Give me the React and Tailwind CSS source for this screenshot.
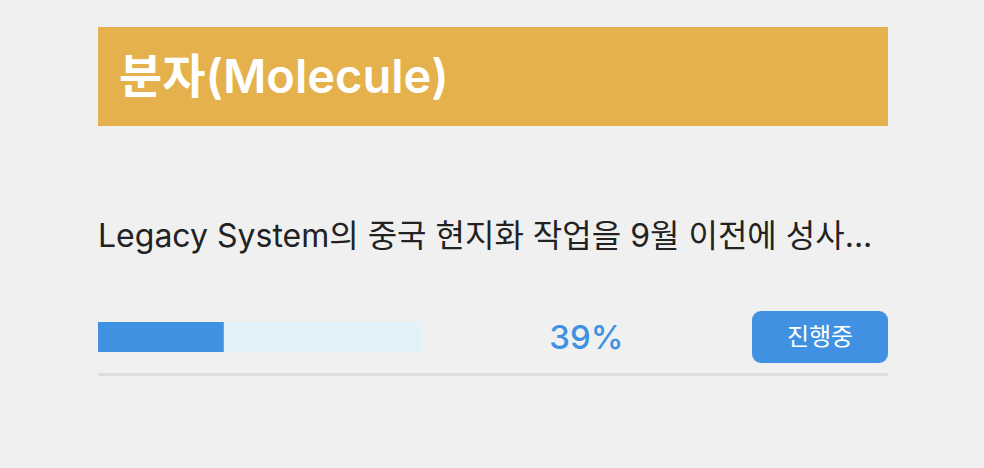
export default function App() {
    const progress = 39
    return (
        <div className="min-h-[468px] w-full bg-[#f0f0f0] pl-[98px] pr-[96px] pt-[27px]" style={{ fontFamily: 'Inter, "Noto Sans CJK KR", sans-serif' }}>
            <div className="flex h-[99px] items-center bg-[#e4b14d] pb-[3px] pl-[21px]">
                <h1 className="text-[47px] font-semibold leading-none text-white">분자(Molecule)</h1>
            </div>
            <p className="mt-[90px] truncate text-[32px] leading-[40px] text-[#222222]">
                Legacy System의 중국 현지화 작업을 9월 이전에 성사...
            </p>
            <div className="mt-[55px] flex items-center border-b-[3px] border-[#dedede] pb-[10px]">
                <div className="h-[30px] w-[323px] bg-[#e1f2fb]">
                    <div className="h-full border-r border-[#62a6ec] bg-[#4191e2]" style={{ width: `${progress}%` }} />
                </div>
                <div className="flex-1 text-center text-[33px] font-medium leading-none text-[#4191e2]">{progress}%</div>
                <button className="flex h-[52px] w-[136px] items-center justify-center rounded-[9px] bg-[#4191e2] text-[24px] text-white">
                    진행중
                </button>
            </div>
        </div>
    )
}
